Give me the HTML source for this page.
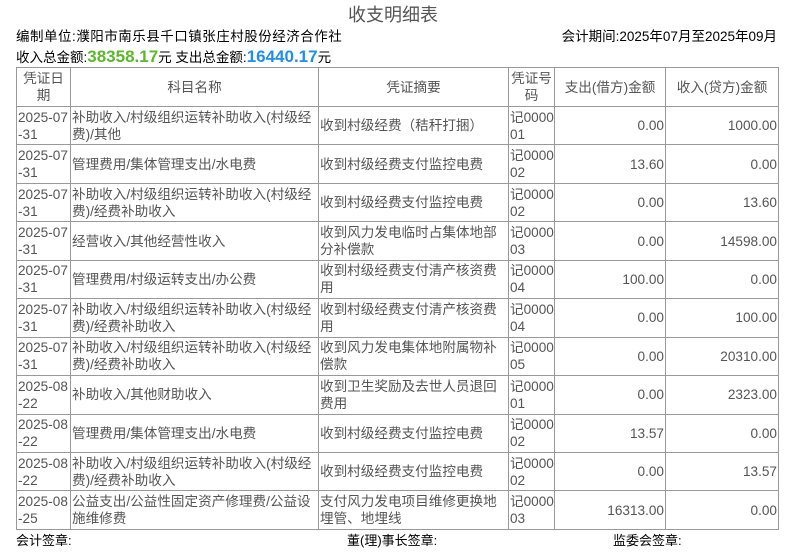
<!DOCTYPE html>
<html><head><meta charset="utf-8"><style>
body{margin:0;width:786px;height:554px;background:#fff;font-family:"Liberation Sans","Noto Sans CJK SC",sans-serif;font-size:13px;color:#000;overflow:hidden;position:relative}
.t{position:absolute;left:0;width:786px;top:4px;text-align:center;font-size:18px;color:#555;line-height:22px}
.l2{position:absolute;left:16px;top:28px;line-height:17px;font-size:13.5px;letter-spacing:0.5px}
.l2r{position:absolute;right:9px;top:28px;line-height:17px;font-size:13.5px}
.l3{position:absolute;left:16px;top:47px;line-height:20px;font-size:13.5px}
.g{color:#5cb82a;font-weight:bold;font-size:17px}
.b{color:#1e8ff0;font-weight:bold;font-size:17px}
table{position:absolute;left:16px;top:67px;border-collapse:collapse;table-layout:fixed;width:762px;font-size:13.6px}
td,th{border:1px solid #999;padding:0 1px;color:#555;font-weight:normal;line-height:17px;height:37.45px;vertical-align:middle;overflow:hidden;white-space:nowrap}
th{text-align:center;height:38px}
td.n{text-align:right}
.f{position:absolute;top:532px;line-height:17px}
</style></head><body>
<div class="t">收支明细表</div>
<div class="l2">编制单位:濮阳市南乐县千口镇张庄村股份经济合作社</div>
<div class="l2r">会计期间:2025年07月至2025年09月</div>
<div class="l3">收入总金额:<span class="g">38358.17</span>元 支出总金额:<span class="b">16440.17</span>元</div>
<table>
<colgroup><col style="width:54px"><col style="width:248px"><col style="width:190px"><col style="width:46px"><col style="width:111px"><col style="width:113px"></colgroup>
<tr><th>凭证日<br>期</th><th>科目名称</th><th>凭证摘要</th><th>凭证号<br>码</th><th>支出(借方)金额</th><th>收入(贷方)金额</th></tr>
<tr><td>2025-07<br>-31</td><td>补助收入/村级组织运转补助收入(村级经<br>费)/其他</td><td>收到村级经费（秸秆打捆）</td><td>记0000<br>01</td><td class="n">0.00</td><td class="n">1000.00</td></tr>
<tr><td>2025-07<br>-31</td><td>管理费用/集体管理支出/水电费</td><td>收到村级经费支付监控电费</td><td>记0000<br>02</td><td class="n">13.60</td><td class="n">0.00</td></tr>
<tr><td>2025-07<br>-31</td><td>补助收入/村级组织运转补助收入(村级经<br>费)/经费补助收入</td><td>收到村级经费支付监控电费</td><td>记0000<br>02</td><td class="n">0.00</td><td class="n">13.60</td></tr>
<tr><td>2025-07<br>-31</td><td>经营收入/其他经营性收入</td><td>收到风力发电临时占集体地部<br>分补偿款</td><td>记0000<br>03</td><td class="n">0.00</td><td class="n">14598.00</td></tr>
<tr><td>2025-07<br>-31</td><td>管理费用/村级运转支出/办公费</td><td>收到村级经费支付清产核资费<br>用</td><td>记0000<br>04</td><td class="n">100.00</td><td class="n">0.00</td></tr>
<tr><td>2025-07<br>-31</td><td>补助收入/村级组织运转补助收入(村级经<br>费)/经费补助收入</td><td>收到村级经费支付清产核资费<br>用</td><td>记0000<br>04</td><td class="n">0.00</td><td class="n">100.00</td></tr>
<tr><td>2025-07<br>-31</td><td>补助收入/村级组织运转补助收入(村级经<br>费)/经费补助收入</td><td>收到风力发电集体地附属物补<br>偿款</td><td>记0000<br>05</td><td class="n">0.00</td><td class="n">20310.00</td></tr>
<tr><td>2025-08<br>-22</td><td>补助收入/其他财助收入</td><td>收到卫生奖励及去世人员退回<br>费用</td><td>记0000<br>01</td><td class="n">0.00</td><td class="n">2323.00</td></tr>
<tr><td>2025-08<br>-22</td><td>管理费用/集体管理支出/水电费</td><td>收到村级经费支付监控电费</td><td>记0000<br>02</td><td class="n">13.57</td><td class="n">0.00</td></tr>
<tr><td>2025-08<br>-22</td><td>补助收入/村级组织运转补助收入(村级经<br>费)/经费补助收入</td><td>收到村级经费支付监控电费</td><td>记0000<br>02</td><td class="n">0.00</td><td class="n">13.57</td></tr>
<tr><td>2025-08<br>-25</td><td>公益支出/公益性固定资产修理费/公益设<br>施维修费</td><td>支付风力发电项目维修更换地<br>埋管、地埋线</td><td>记0000<br>03</td><td class="n">16313.00</td><td class="n">0.00</td></tr>
</table>
<div class="f" style="left:16px">会计签章:</div>
<div class="f" style="left:347px">董(理)事长签章:</div>
<div class="f" style="left:613px">监委会签章:</div>
</body></html>
